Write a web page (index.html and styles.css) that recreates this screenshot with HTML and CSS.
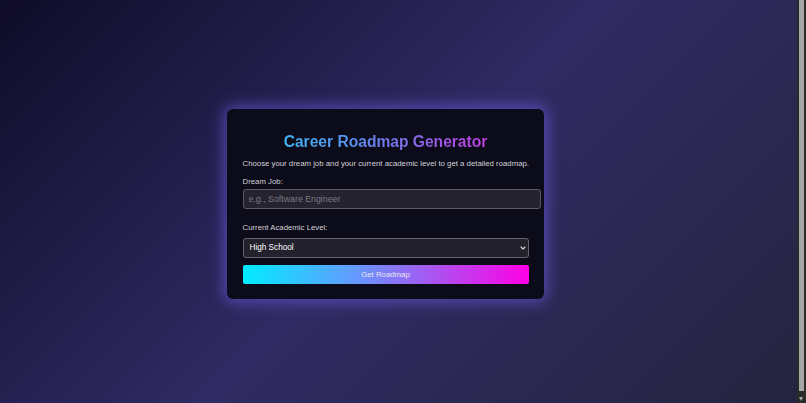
FILE: index.html
```html
<!DOCTYPE html>
<html lang="en">
<head>
<meta charset="utf-8">
<title>Career Roadmap Generator</title>
<link rel="stylesheet" href="styles.css">
</head>
<body>
  <main class="card">
    <h1 class="title">Career Roadmap Generator</h1>
    <p class="intro">Choose your dream job and your current academic level to get a detailed roadmap.</p>
    <label class="label" for="job">Dream Job:</label>
    <input class="text-input" id="job" type="text" placeholder="e.g., Software Engineer">
    <label class="label label-level" for="level">Current Academic Level:</label>
    <div class="select-wrap">
      <select class="select" id="level">
        <option>High School</option>
        <option>Undergraduate</option>
        <option>Graduate</option>
      </select>
      <svg class="chevron" width="6" height="4" viewBox="0 0 6 4" aria-hidden="true"><path d="M1 1 L3 3 L5 1" fill="none" stroke="#d8d8d8" stroke-width="1.1" stroke-linecap="round" stroke-linejoin="round"/></svg>
    </div>
    <button class="btn" type="button">Get Roadmap</button>
  </main>
  <div class="fake-scrollbar" aria-hidden="true">
    <div class="fake-thumb"></div>
    <div class="fake-arrow"></div>
  </div>
</body>
</html>
```

FILE: styles.css
```css
html {
  color-scheme: dark;
}

body {
  box-sizing: border-box;
  margin: 0;
  height: 100vh;
  overflow: hidden;
  padding: 4px 36px 0 0;
  display: flex;
  align-items: center;
  justify-content: center;
  font-family: "Liberation Sans", Arial, sans-serif;
  background: linear-gradient(135deg, #0f0c29 0%, #302b63 50%, #24243e 100%);
}

.card {
  width: 286px;
  padding: 15px 15px 15px 16px;
  background: #0c0b19;
  border-radius: 6px;
  box-shadow: 0 0 15px 3px rgba(118, 104, 255, 0.55);
  color: #d2d2d8;
}

.title {
  margin: 8px 0 7px;
  font-size: 15.6px;
  line-height: 20px;
  font-weight: 700;
  text-align: center;
  background: linear-gradient(90deg, #2fc8f0 0%, #5c8ef0 40%, #a84ce2 75%, #dc30dc 100%);
  -webkit-background-clip: text;
  background-clip: text;
  color: transparent;
}

.intro {
  margin: 0 0 8px;
  font-size: 7.8px;
  line-height: 10px;
  white-space: nowrap;
  color: #d2d2d8;
}

.label {
  display: block;
  font-size: 7.8px;
  line-height: 10px;
  margin-bottom: 2px;
  color: #d2d2d8;
}

.label-level {
  margin-top: 14px;
  margin-bottom: 5px;
}

.text-input {
  display: block;
  width: 100%;
  height: 18px;
  padding: 0 5px;
  margin: 0;
  border: 1px solid #5b5a64;
  border-radius: 3px;
  background: #24232f;
  color: #e6e6e6;
  font-family: inherit;
  font-size: 8.8px;
}

.text-input::placeholder {
  color: #7a7985;
}

.select-wrap {
  position: relative;
}

.select {
  display: block;
  width: 100%;
  height: 20px;
  margin: 0;
  padding: 0 6px;
  -webkit-appearance: none;
  appearance: none;
  border: 1px solid #65646e;
  border-radius: 3px;
  background: #22212c;
  color: #ffffff;
  font-family: inherit;
  font-size: 8.2px;
  font-weight: 400;
}

.chevron {
  position: absolute;
  right: 3px;
  top: 8px;
}

.btn {
  display: block;
  width: 100%;
  height: 19px;
  margin-top: 7px;
  padding: 0;
  border: 0;
  border-radius: 2px;
  background: linear-gradient(90deg, #00ecff 0%, #5aa3ff 35%, #b24cf0 70%, #ff00e6 100%);
  color: #e8e8f2;
  font-family: inherit;
  font-size: 7.8px;
}

.fake-scrollbar {
  position: fixed;
  top: 0;
  right: 0;
  width: 9px;
  height: 100%;
  background: #2a2a2a;
}

.fake-thumb {
  position: absolute;
  top: 0;
  left: 2px;
  width: 5px;
  height: 391px;
  background: #a6a6a6;
}

.fake-arrow {
  position: absolute;
  bottom: 2px;
  left: 2px;
  width: 0;
  height: 0;
  border-left: 2.5px solid transparent;
  border-right: 2.5px solid transparent;
  border-top: 4px solid #a6a6a6;
}
```
